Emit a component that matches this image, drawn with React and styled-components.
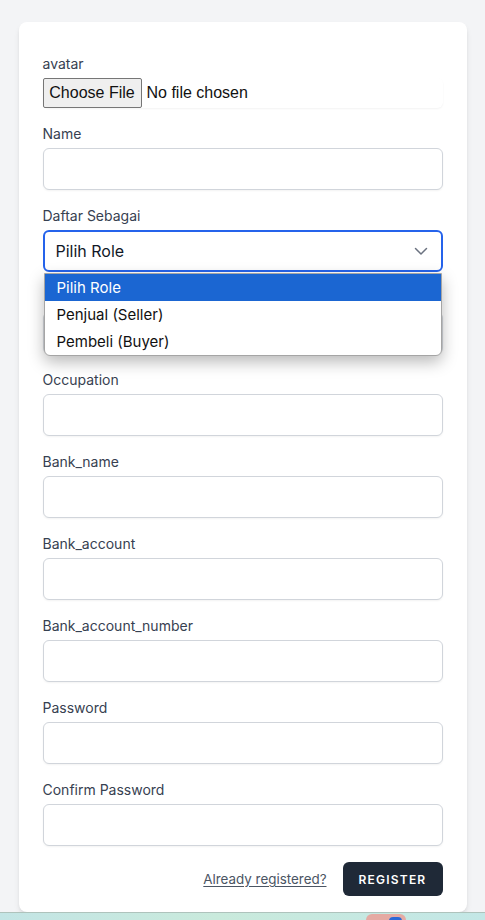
import React from "react";
import styled, { createGlobalStyle } from "styled-components";

const GlobalStyle = createGlobalStyle`
  * { box-sizing: border-box; }
  html, body { margin: 0; padding: 0; }
  body {
    background: #f3f4f6;
    font-family: Inter, "Noto Sans", "Liberation Sans", sans-serif;
    color: #111827;
  }
`;

const Page = styled.div`
  height: 920px;
  display: flex;
  flex-direction: column;
  align-items: center;
  padding-top: 22px;
  overflow: hidden;
`;

const Card = styled.form`
  width: 448px;
  background: #fff;
  border-radius: 8px;
  box-shadow: 0 4px 6px -1px rgba(0, 0, 0, 0.1), 0 2px 4px -2px rgba(0, 0, 0, 0.1);
  padding: 32px 24px 16px;
  display: flex;
  flex-direction: column;
  gap: 16px;
`;

const Field = styled.div`
  display: flex;
  flex-direction: column;
  gap: 4px;
  position: relative;
`;

const Label = styled.label`
  font-size: 14px;
  line-height: 20px;
  min-height: 20px;
  font-weight: 400;
  color: #374151;
`;

const FileBox = styled.div`
  height: 30px;
  display: flex;
  align-items: center;
  gap: 5px;
  border-radius: 6px;
  box-shadow: 0 1px 2px rgba(0, 0, 0, 0.05);
  font-family: "Liberation Sans", Arial, sans-serif;
  font-size: 16px;
  color: #111;
`;

const FileButton = styled.button`
  height: 30px;
  width: 99px;
  padding: 0;
  background: #efefef;
  border: 1px solid #767676;
  border-radius: 2px;
  font-family: "Liberation Sans", Arial, sans-serif;
  font-size: 16px;
  color: #111;
`;

const Input = styled.input`
  height: 42px;
  width: 100%;
  border: 1px solid #d1d5db;
  border-radius: 6px;
  box-shadow: 0 1px 2px rgba(0, 0, 0, 0.05);
  padding: 8px 12px;
  font-size: 16px;
  font-family: inherit;
  background: #fff;
  outline: none;
`;

const SelectBox = styled.div`
  height: 42px;
  border: 2px solid #2563eb;
  border-radius: 6px;
  display: flex;
  align-items: center;
  justify-content: space-between;
  padding: 0 13px 0 11px;
  font-size: 16px;
  color: #111827;
  background: #fff;
`;

const Popup = styled.ul`
  position: absolute;
  left: 1px;
  right: 1px;
  top: 67px;
  margin: 0;
  padding: 0;
  list-style: none;
  background: #fff;
  border: 1px solid #a5a5a5;
  border-radius: 0 0 6px 6px;
  box-shadow: 0 6px 16px rgba(0, 0, 0, 0.28);
  overflow: hidden;
  z-index: 10;
`;

const Option = styled.li`
  height: 27px;
  display: flex;
  align-items: center;
  padding-left: 12px;
  font-size: 15px;
  color: ${(p) => (p.$active ? "#fff" : "#111")};
  background: ${(p) => (p.$active ? "#1b66d2" : "transparent")};
`;

const Actions = styled.div`
  display: flex;
  justify-content: flex-end;
  align-items: center;
  gap: 16px;
`;

const LinkText = styled.a`
  font-size: 13.4px;
  color: #4b5563;
  text-decoration: underline;
  text-underline-offset: 2px;
`;

const Button = styled.button`
  height: 34px;
  padding: 0 16px;
  width: 100px;
  background: #1f2937;
  color: #fff;
  border: none;
  border-radius: 6px;
  font-family: inherit;
  font-size: 12px;
  font-weight: 600;
  letter-spacing: 0.1em;
  text-transform: uppercase;
`;

const Strip = styled.div`
  margin-top: auto;
  width: 100%;
  height: 8px;
  border-top: 1px solid #aec3bc;
  background: linear-gradient(90deg, #c3e5e5 0%, #c9eadc 45%, #c3e7e6 100%);
  position: relative;
`;

const RedChip = styled.div`
  position: absolute;
  left: 366px;
  top: 1px;
  width: 40px;
  height: 12px;
  border-radius: 6px 6px 0 0;
  background: #e5aaa3;
`;

const BlueChip = styled.div`
  position: absolute;
  left: 389px;
  top: 4px;
  width: 13px;
  height: 10px;
  border-radius: 4px 4px 0 0;
  background: #2b68d6;
`;

const Chevron = () => (
  <svg width="14" height="14" viewBox="0 0 14 14" fill="none">
    <path d="M1.5 4.5l5.5 5.5 5.5-5.5" stroke="#6b7280" strokeWidth="1.5" strokeLinecap="round" strokeLinejoin="round" />
  </svg>
);

const fields = [
  "Occupation",
  "Bank_name",
  "Bank_account",
  "Bank_account_number",
  "Password",
  "Confirm Password",
];

export default function App() {
  return (
    <>
      <GlobalStyle />
      <Page>
        <Card onSubmit={(e) => e.preventDefault()}>
          <Field>
            <Label>avatar</Label>
            <FileBox>
              <FileButton type="button">Choose File</FileButton>
              <span>No file chosen</span>
            </FileBox>
          </Field>
          <Field>
            <Label>Name</Label>
            <Input type="text" />
          </Field>
          <Field>
            <Label>Daftar Sebagai</Label>
            <SelectBox>
              <span>Pilih Role</span>
              <Chevron />
            </SelectBox>
            <Popup>
              <Option $active>Pilih Role</Option>
              <Option>Penjual (Seller)</Option>
              <Option>Pembeli (Buyer)</Option>
            </Popup>
          </Field>
          <Field aria-hidden="true">
            <Label />
            <Input type="text" tabIndex={-1} />
          </Field>
          {fields.map((f) => (
            <Field key={f}>
              <Label>{f}</Label>
              <Input type={f.includes("Password") ? "password" : "text"} />
            </Field>
          ))}
          <Actions>
            <LinkText href="#">Already registered?</LinkText>
            <Button type="submit">Register</Button>
          </Actions>
        </Card>
        <Strip>
          <RedChip />
          <BlueChip />
        </Strip>
      </Page>
    </>
  );
}
